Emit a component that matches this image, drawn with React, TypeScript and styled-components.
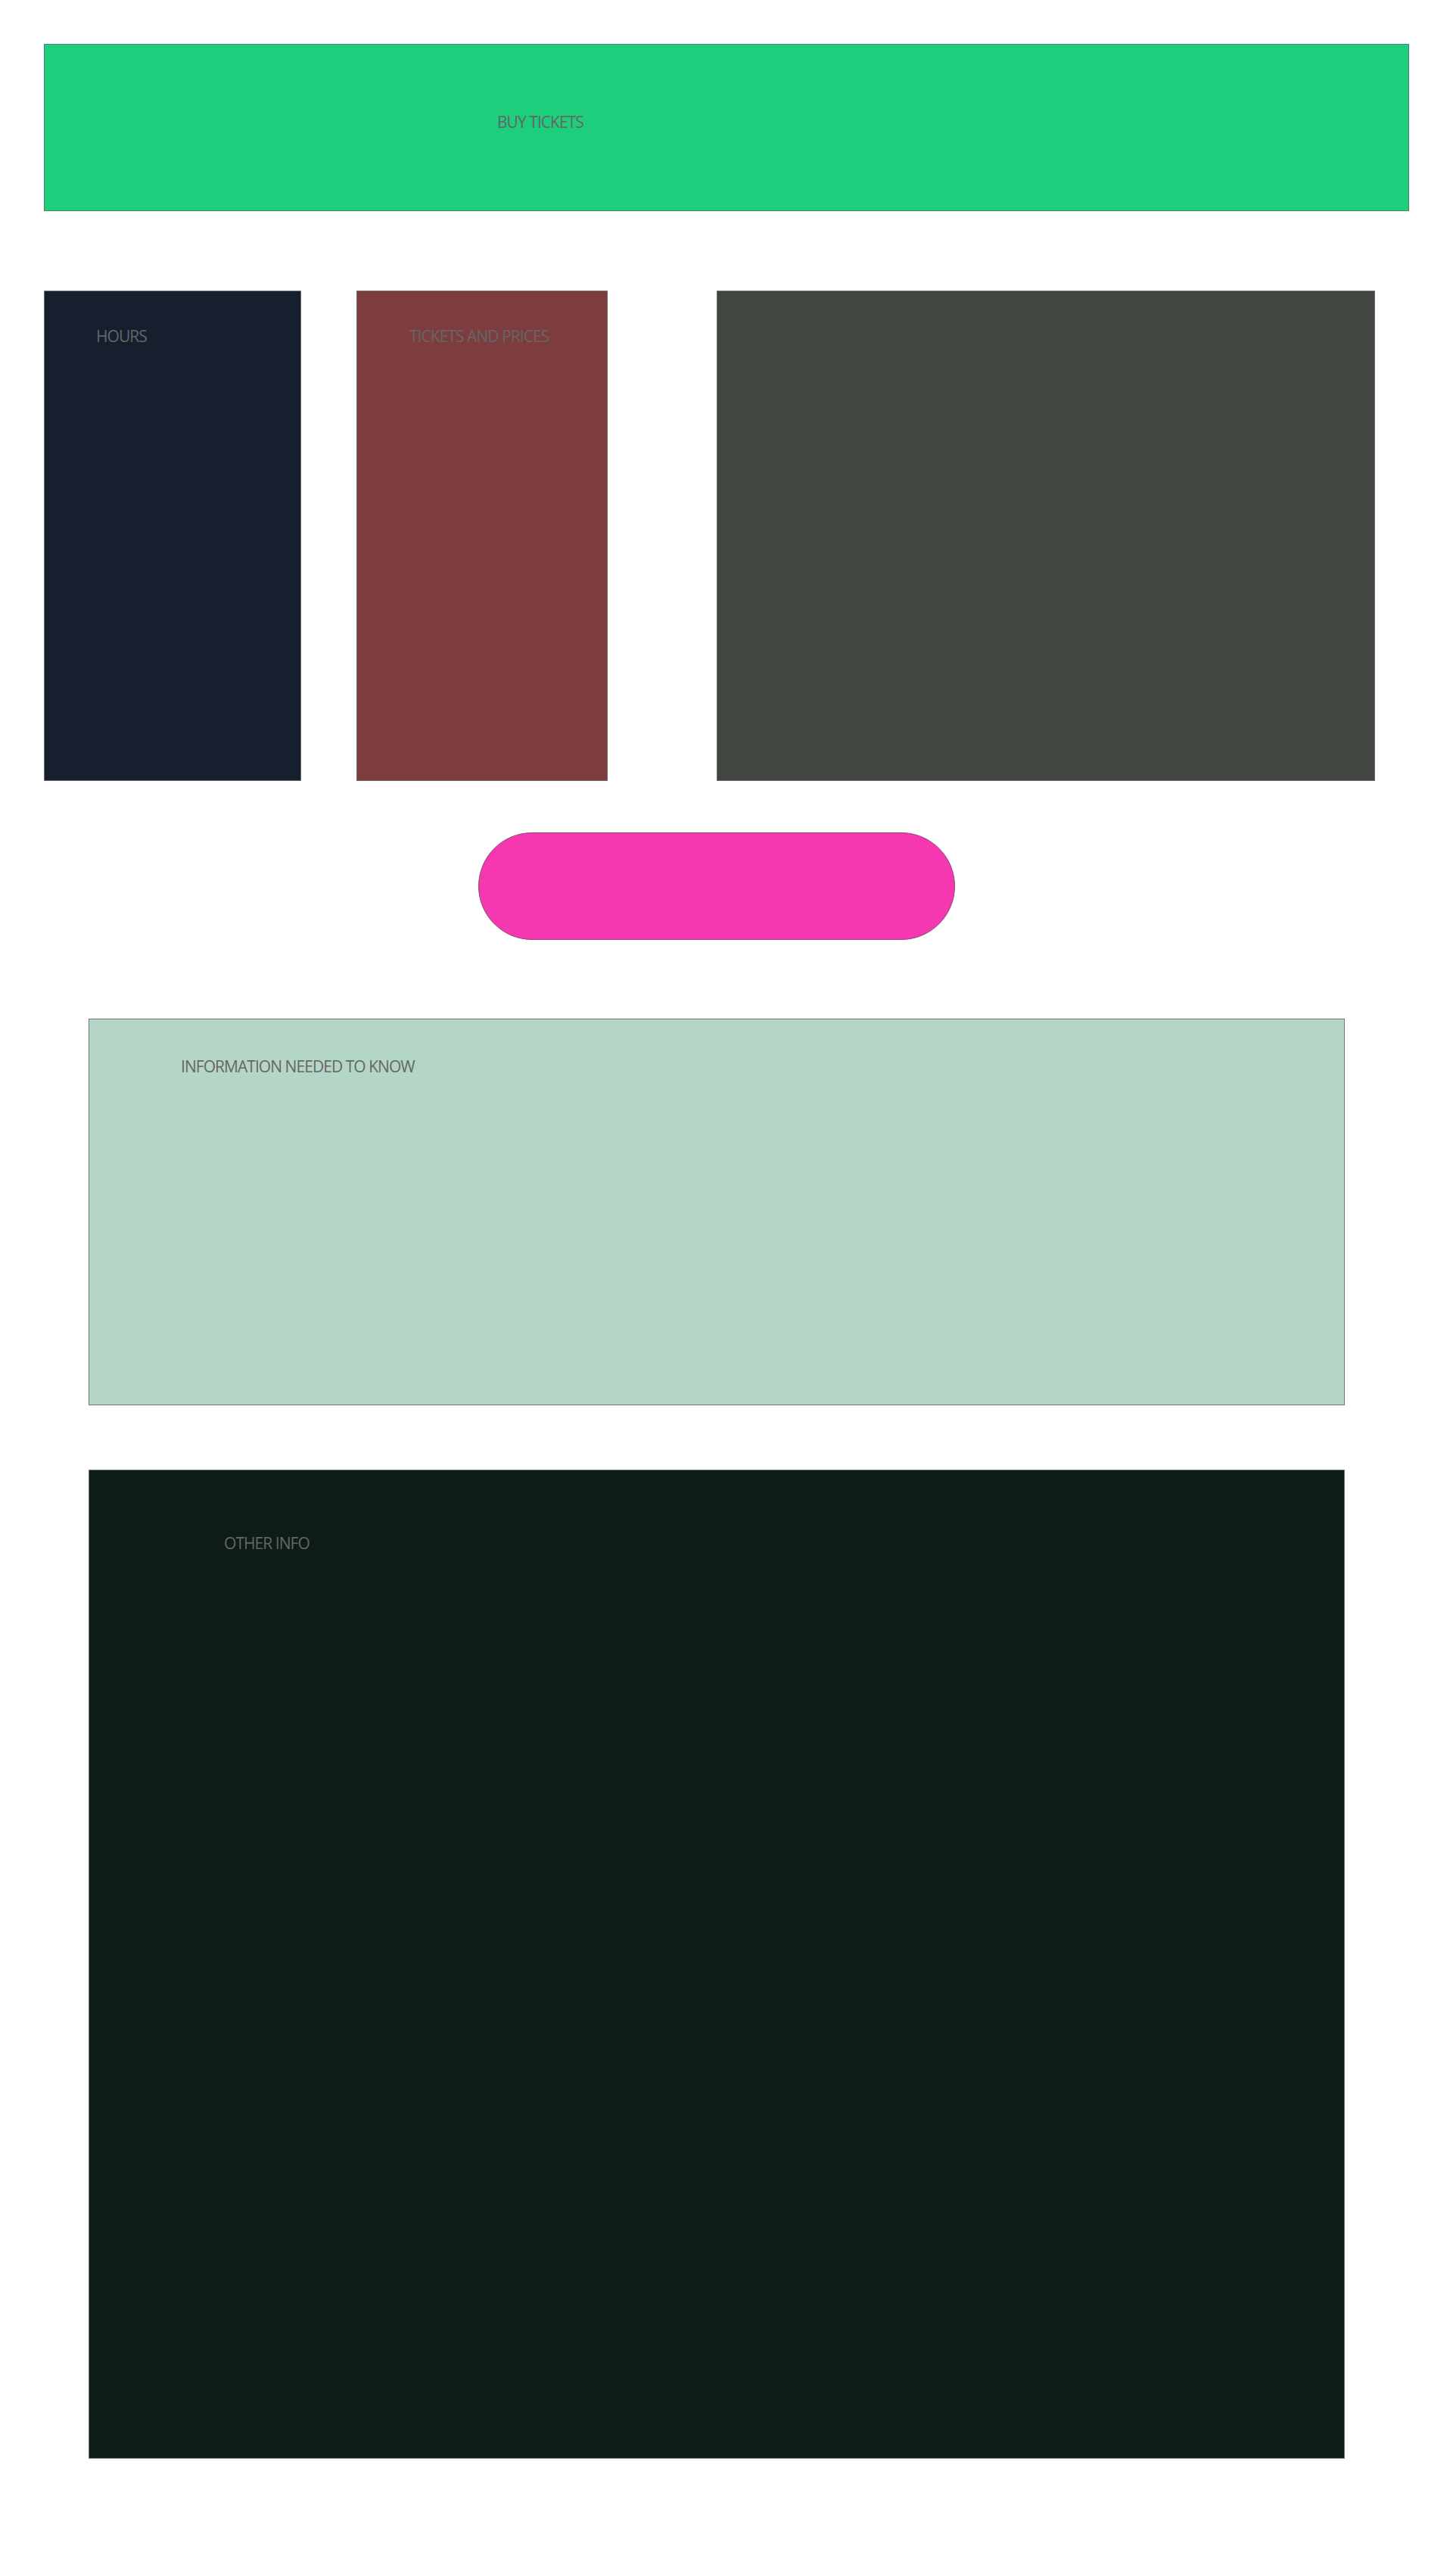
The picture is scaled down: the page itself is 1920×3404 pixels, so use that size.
import React from "react";
import styled, { createGlobalStyle } from "styled-components";

const GlobalStyle = createGlobalStyle`
  html, body {
    margin: 0;
    padding: 0;
    background: #ffffff;
  }
  body {
    font-family: "Open Sans", "Noto Sans", "Liberation Sans", sans-serif;
  }
  * { box-sizing: border-box; }
`;

const Page = styled.div`
  width: 1920px;
  min-height: 3404px;
  padding: 58px 58px 155px 58px;
  display: flex;
  flex-direction: column;
`;

const Label = styled.span`
  display: block;
  font-size: 21px;
  line-height: 30px;
  letter-spacing: -0.95px;
  color: #666666;
  text-transform: uppercase;
  white-space: nowrap;
`;

const Banner = styled.section`
  height: 221px;
  background: #1dce7c;
  border: 1px solid #4a8470;
  padding: 87px 0 0 598px;
`;

const Row = styled.div`
  margin-top: 105px;
  display: flex;
  align-items: stretch;
  height: 648px;
  width: 1759px;
`;

const Column = styled.div<{ $bg: string; $w: number; $gap: number; $padLeft: number }>`
  width: ${(p) => p.$w}px;
  margin-left: ${(p) => p.$gap}px;
  background: ${(p) => p.$bg};
  border: 1px solid #6b6b6b;
  padding: 44px 0 0 ${(p) => p.$padLeft}px;
`;

const PillRow = styled.div`
  margin-top: 68px;
  display: flex;
  padding-left: 574px;
`;

const Pill = styled.button`
  width: 630px;
  height: 142px;
  border-radius: 71px;
  background: #f538b0;
  border: 1px solid #8a4a7a;
  padding: 0;
  cursor: pointer;
`;

const Panel = styled.section<{ $bg: string; $h: number; $mt: number; $pt: number; $pl: number }>`
  margin-top: ${(p) => p.$mt}px;
  margin-left: 59px;
  width: 1660px;
  height: ${(p) => p.$h}px;
  background: ${(p) => p.$bg};
  border: 1px solid #6e7a72;
  padding: ${(p) => p.$pt}px 0 0 ${(p) => p.$pl}px;
`;

export default function App() {
  return (
    <>
      <GlobalStyle />
      <Page>
        <Banner>
          <Label>Buy Tickets</Label>
        </Banner>
        <Row>
          <Column $bg="#161f2d" $w={340} $gap={0} $padLeft={68}>
            <Label>Hours</Label>
          </Column>
          <Column $bg="#7d3d3e" $w={332} $gap={73} $padLeft={69}>
            <Label>Tickets and Prices</Label>
          </Column>
          <Column $bg="#414640" $w={870} $gap={144} $padLeft={60}>
          </Column>
        </Row>
        <PillRow>
          <Pill aria-label="action" />
        </PillRow>
        <Panel $bg="#b4d6c6" $h={511} $mt={104} $pt={47} $pl={121}>
          <Label>Information needed to know</Label>
        </Panel>
        <Panel $bg="#0d1c14" $h={1307} $mt={85} $pt={81} $pl={178}>
          <Label>Other info</Label>
        </Panel>
      </Page>
    </>
  );
}
